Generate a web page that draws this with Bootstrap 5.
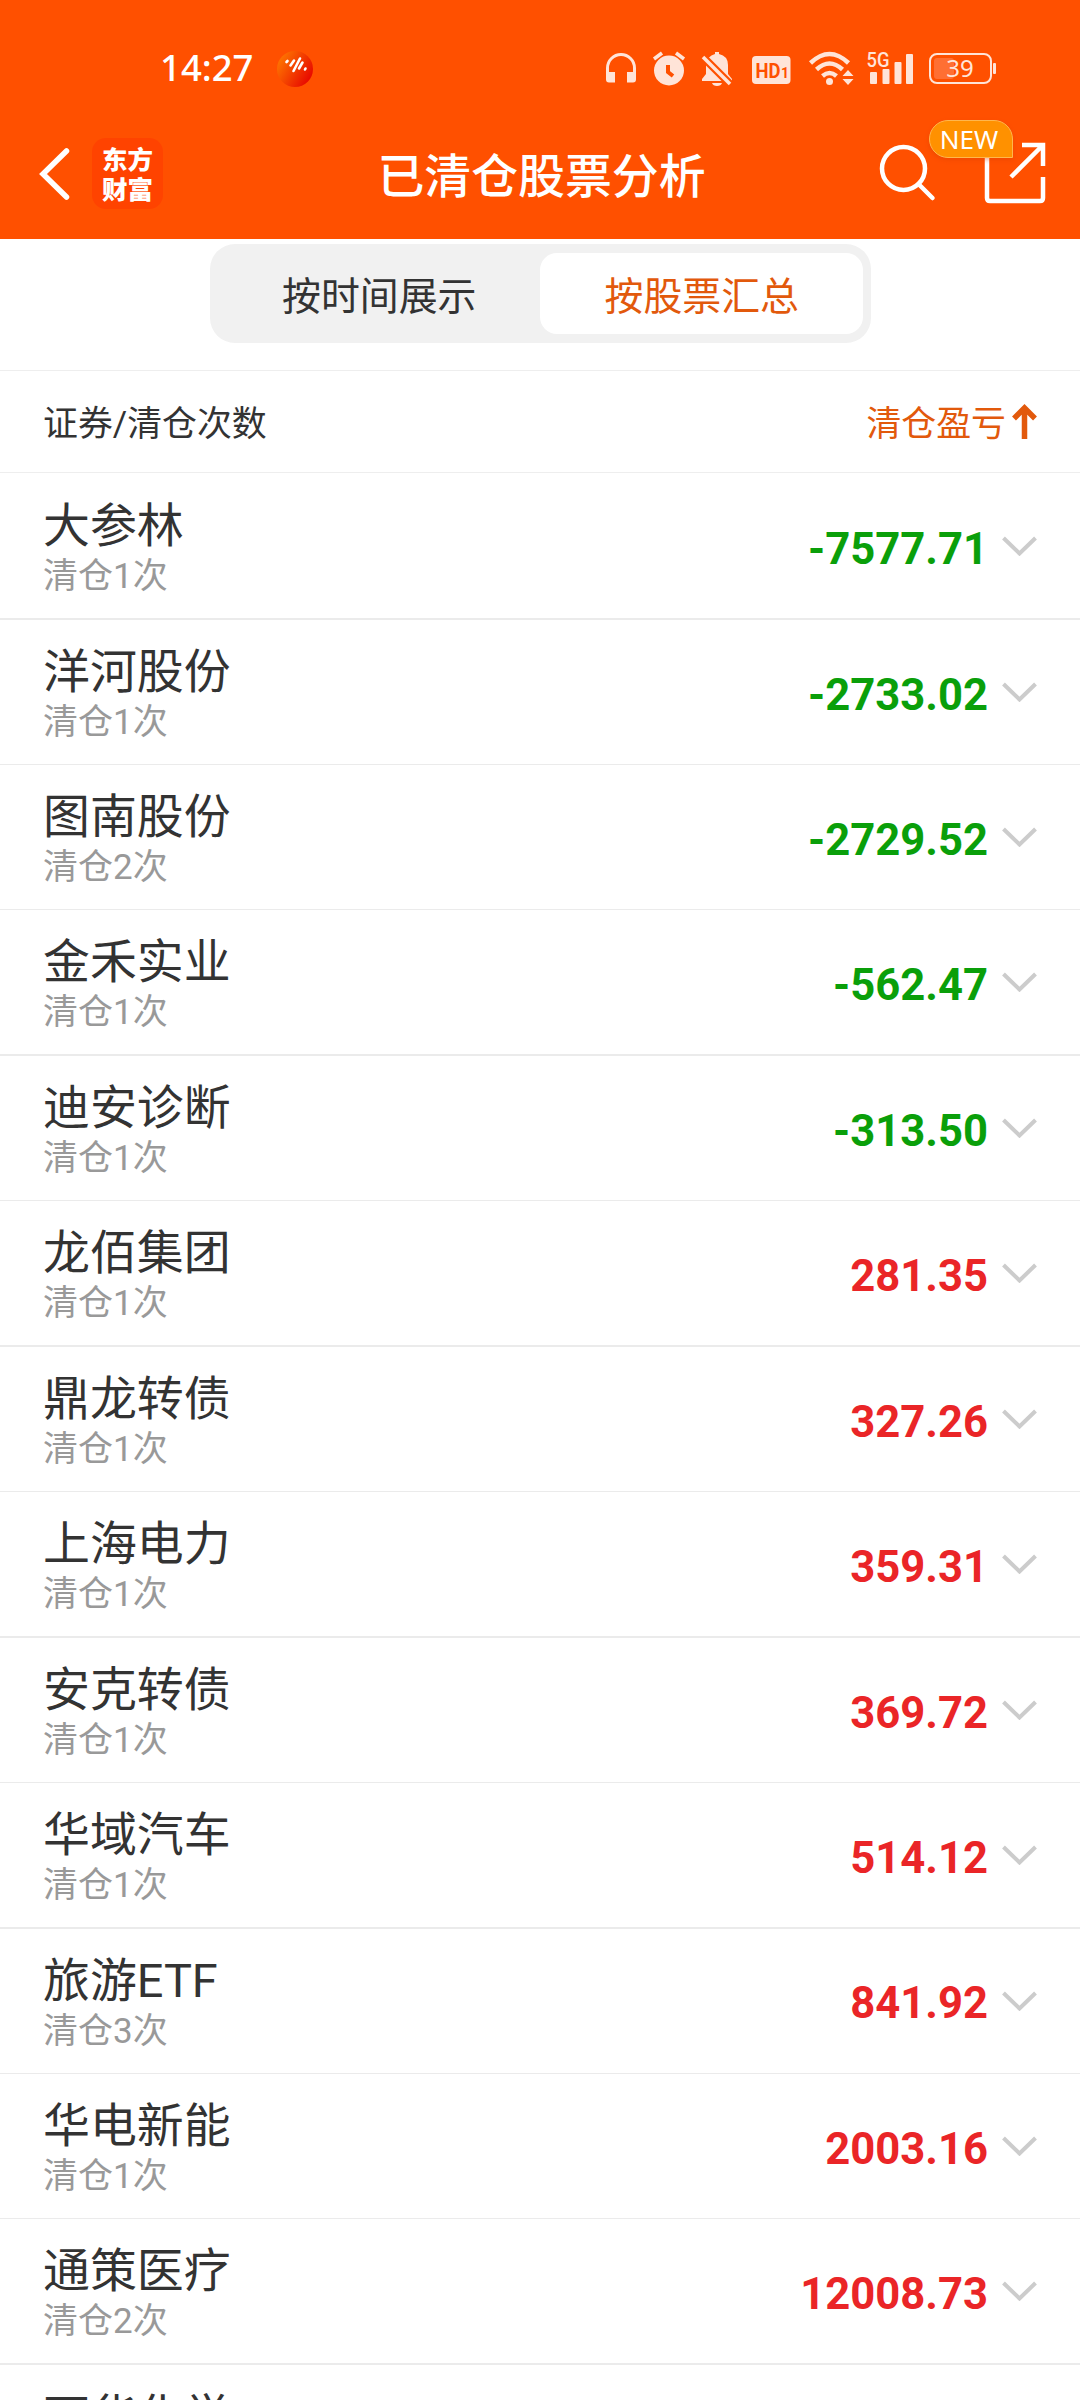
<!DOCTYPE html>
<html lang="zh-CN">
<head>
<meta charset="utf-8">
<meta name="viewport" content="width=device-width, initial-scale=1">
<title>已清仓股票分析</title>
<link rel="stylesheet" href="https://cdn.jsdelivr.net/npm/bootstrap@5.3.0/dist/css/bootstrap.min.css">
<style>
body{width:1080px;height:2400px;overflow:hidden;background:#fff;color:#333;font-family:Roboto,"Noto Sans CJK SC",sans-serif;line-height:1}
svg{display:block;flex:none}
.topbar{background:#ff5000;height:239px;color:#fff}
.status{height:138px;padding:0 80px 0 160px}
.clock{font:500 36.5px/1 "Noto Sans",sans-serif;width:93px;padding-bottom:3px}
.app-dot{margin-left:24px}
.titlebar{height:70px;padding:0 34px 0 38px}
.brand{width:71px;height:71px;border-radius:14px;background:#ff4300;font:900 25.5px/30px "Noto Sans CJK SC",sans-serif;margin-left:22px}
.page-title{font-size:46.9px;font-weight:500;line-height:60px;padding:8px 0 0 3px}
.tools{margin-top:-2px}
.flag{background:#ff9100;border:1px solid #ffb74d;border-radius:19px 19px 0 19px;width:84px;height:38px;left:929px;top:120px;padding-right:4px;font:400 26px/37px "Noto Sans","Open Sans",sans-serif;box-shadow:0 2px 4px #d9400066}
.tabs-area{height:131px;padding-top:5px}
.seg{width:661px;height:99px;border-radius:25px;background:#f1f1f1;padding:9px 8px;font-size:38.9px}
.seg .nav-link{color:#333;padding:8px 0 0 1px;border-radius:17px;font-weight:400;width:322.5px;height:81px}
.seg .nav-link.active{background:#fff;color:#e2590c}
.hair{height:1px;background:#eee}
.cols{height:101px;padding:7px 43px 0;font-size:34.9px}
.accent{color:#e2590c}
.sort-up{margin:-6px 0 0 6px}
.deals{padding-top:1.15px}
.deal{height:145.44px}
.deal-in{padding:0 43px}
.rule{height:1.42px;background:#ebebeb}
.nm{font-size:46.9px;line-height:50px;margin-top:27px}
.ct{font-size:35px;line-height:40px;color:#999;margin-top:6px}
.amt{font-size:43.6px;font-weight:700;padding:7.5px 14px 0 0}
.dn{color:#0a9f0a}.up{color:#ea2527}
</style>
<script src="https://cdn.jsdelivr.net/npm/bootstrap@5.3.0/dist/js/bootstrap.bundle.min.js"></script>
</head>
<body>
<header class="topbar position-relative">
  <div class="status d-flex align-items-center">
    <div class="clock">14:27</div>
    <svg class="app-dot" width="36" height="36" viewBox="0 0 36 36"><defs><linearGradient id="g" x1="0" y1=".2" x2="1" y2=".8"><stop offset="0" stop-color="#ff7a00"/><stop offset="1" stop-color="#e60000"/></linearGradient></defs><circle cx="18" cy="18" r="18" fill="url(#g)"/><path d="M9.500 11l1-1M13.500 14.500l3.500-5M16.500 20l6.500-12.500M22 17.500l3.500-6M28 18.500l.5-1" stroke="#fff" stroke-width="2.600" stroke-linecap="round"/></svg>
    <svg class="ms-auto" width="400" height="40" viewBox="600 49 400 40" fill="#ffe4d8">
      <path d="M607.500 74v-6a13.500 13.500 0 0 1 27 0v6" fill="none" stroke="#ffe4d8" stroke-width="3"/><path d="M606 72h9v10.500h-6q-3 0-3-3zM636 72h-9v10.500h6q3 0 3-3z"/>
      <circle cx="669" cy="70.500" r="15"/><path d="M654 59l8-6M684 59l-8-6" stroke="#ffe4d8" stroke-width="3.500"/><path d="M668 65v7l5 4" fill="none" stroke="#ff5000" stroke-width="4"/>
      <path d="M702 81v-2l4-5v-9q1-9 9-11v-2h4v2q9 2 9 11v9l4 5v2zM712 83h10q-1 3-5 3t-5-3z"/><path d="M701 55l31 31" stroke="#ff5000" stroke-width="8"/><path d="M703 57l27 27" stroke="#ffe4d8" stroke-width="3.500"/>
      <rect x="752" y="56" width="38.500" height="28" rx="4"/><text x="755.500" y="77.500" font-family="Roboto" font-weight="700" font-size="21" textLength="25" lengthAdjust="spacingAndGlyphs" fill="#ff5000">HD</text><text x="781" y="77.500" font-family="Roboto" font-weight="700" font-size="14" fill="#ff5000">1</text>
      <g fill="none" stroke="#ffe4d8" stroke-width="4.500"><path d="M810.500 63q19-18 38 0M816.500 69.500q13-12 26 0M822.500 76q7-6 14 0"/></g><circle cx="829.500" cy="81.500" r="3.500"/><path d="M842.500 76l5.500-6 5.500 6zM842.500 79l5.500 6 5.500-6z"/>
      <text x="866.500" y="67" font-family="Roboto" font-weight="500" font-size="21" textLength="23" lengthAdjust="spacingAndGlyphs">5G</text><rect x="870" y="72" width="7" height="12" rx="1"/><rect x="882.500" y="69" width="7" height="15" rx="1"/><rect x="894.500" y="62" width="7" height="22" rx="1"/><rect x="906" y="54" width="7" height="30" rx="1"/>
      <rect x="930" y="54" width="61" height="29" rx="7" fill="none" stroke="#ffe4d8" stroke-width="2"/><rect x="934" y="58" width="20" height="21" rx="3" fill="#ff6f33"/><rect x="993" y="63" width="3" height="11" rx="1"/><text x="960" y="77" font-family="Noto Sans" font-size="24" text-anchor="middle">39</text>
    </svg>
  </div>
  <nav class="titlebar d-flex align-items-center position-relative">
    <svg width="32" height="54" viewBox="0 0 32 54"><path d="M28.500 5L5 28 28.500 51" fill="none" stroke="#fff" stroke-width="5.500" stroke-linecap="round"/></svg>
    <div class="brand d-flex flex-column align-items-center justify-content-center"><span>东方</span><span>财富</span></div>
    <h1 class="page-title mb-0 position-absolute start-50 translate-middle-x">已清仓股票分析</h1>
    <svg class="tools ms-auto" width="170" height="64" viewBox="876 140 170 64" fill="none" stroke="#fff" stroke-width="4.500"><circle cx="903.500" cy="168.500" r="21.500"/><path d="M918.500 184l14 14" stroke-linecap="round"/><path d="M987 157v41q0 3 3 3h50q3 0 3-3v-21M1022 145h21v21M1042 146l-31 31"/></svg>
  </nav>
  <span class="flag position-absolute text-center">NEW</span>
</header>
<section class="tabs-area d-flex justify-content-center align-items-start">
  <div class="seg nav flex-nowrap"><a class="nav-link d-flex align-items-center justify-content-center">按时间展示</a><a class="nav-link active d-flex align-items-center justify-content-center">按股票汇总</a></div>
</section>
<div class="hair"></div>
<div class="cols d-flex align-items-center justify-content-between"><span>证券/清仓次数</span><span class="accent d-flex align-items-center">清仓盈亏<svg class="sort-up" width="25" height="36" viewBox="0 0 25 36" fill="none" stroke="#e2590c" stroke-width="5.500"><path d="M12.500 35V4M2 14.500L12.500 4 23 14.500"/></svg></span></div>
<div class="hair"></div>
<main id="list" class="deals"></main>
<script>
const deals=[["大参林",1,"-7577.71"],["洋河股份",1,"-2733.02"],["图南股份",2,"-2729.52"],["金禾实业",1,"-562.47"],["迪安诊断",1,"-313.50"],["龙佰集团",1,"281.35"],["鼎龙转债",1,"327.26"],["上海电力",1,"359.31"],["安克转债",1,"369.72"],["华域汽车",1,"514.12"],["旅游ETF",3,"841.92"],["华电新能",1,"2003.16"],["通策医疗",2,"12008.73"],["万华化学",1,""]];
document.getElementById("list").innerHTML=deals.map(([n,c,a])=>`<div class="deal d-flex flex-column"><div class="deal-in flex-grow-1 d-flex justify-content-between"><div><div class="nm">${n}</div><div class="ct">清仓${c}次</div></div><div class="d-flex align-items-center"><span class="amt ${a[0]==="-"?"dn":"up"}">${a}</span><svg width="35" height="20" viewBox="0 0 35 20"><path d="M1.500 2L17.500 17.500 33.500 2" fill="none" stroke="#ccc" stroke-width="4"/></svg></div></div><div class="rule"></div></div>`).join("");
</script>
</body>
</html>
